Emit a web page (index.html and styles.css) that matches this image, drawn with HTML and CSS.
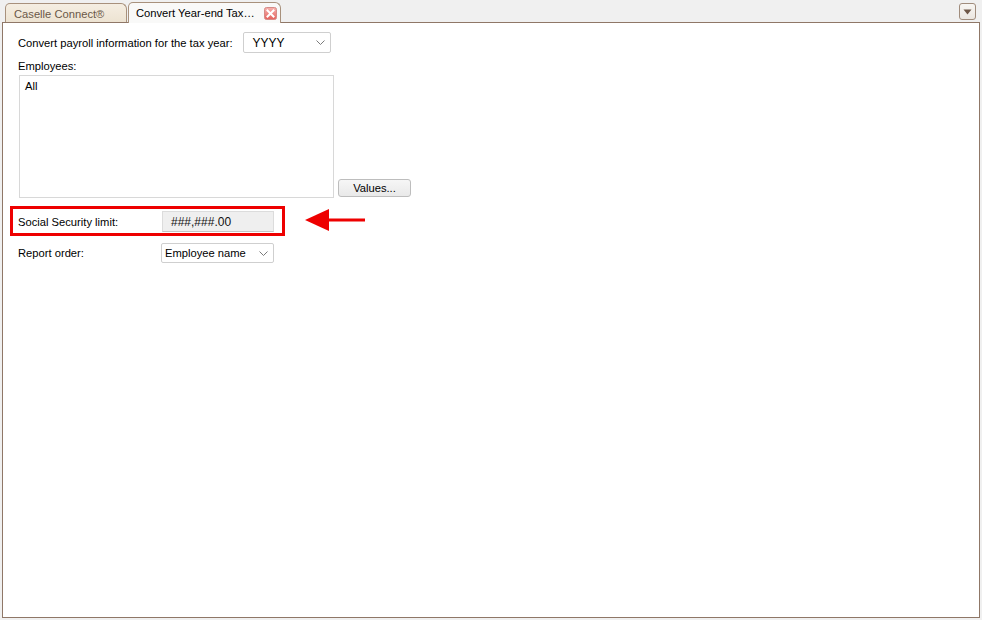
FILE: index.html
```html
<!DOCTYPE html>
<html>
<head>
<meta charset="utf-8">
<link rel="stylesheet" href="styles.css">
</head>
<body>
<div class="page">
  <div class="tabbar">
    <div class="tab tab-inactive">Caselle Connect®</div>
    <div class="tab tab-active">
      <span class="tab-title">Convert Year-end Tax…</span>
      <svg class="tab-close" width="13" height="13" viewBox="0 0 13 13">
        <defs>
          <linearGradient id="cg" x1="0" y1="0" x2="0" y2="1">
            <stop offset="0" stop-color="#f7b4b0"/>
            <stop offset="1" stop-color="#e4605a"/>
          </linearGradient>
        </defs>
        <rect x="0.5" y="0.5" width="12" height="12" rx="2" fill="url(#cg)" stroke="#d58a86"/>
        <path d="M3.5 3.5 L9.5 9.5 M9.5 3.5 L3.5 9.5" stroke="#ffffff" stroke-width="2" stroke-linecap="square"/>
      </svg>
    </div>
    <div class="tab-menu">
      <svg width="9" height="6" viewBox="0 0 9 6"><path d="M0.5 0.5 H8.5 L4.5 5.5 Z" fill="#6e5646"/></svg>
    </div>
  </div>
  <div class="panel">
    <div class="content">
      <div class="row">
        <span class="label">Convert payroll information for the tax year:</span>
        <div class="select select-year">
          <span>YYYY</span>
          <svg class="chev" width="9" height="5" viewBox="0 0 9 5"><path d="M0.5 0.5 L4.5 4.5 L8.5 0.5" fill="none" stroke="#7a7a7a" stroke-width="1"/></svg>
        </div>
      </div>
      <div class="label emp-label">Employees:</div>
      <div class="list-row">
        <div class="listbox"><div class="list-item">All</div></div>
        <div class="button">Values...</div>
      </div>
      <div class="highlight-row">
        <div class="highlight">
          <span class="label ss-label">Social Security limit:</span>
          <div class="field">###,###.00</div>
        </div>
        <svg class="arrow" width="60" height="22" viewBox="0 0 60 22">
          <path d="M0 11 L24 0 L24 22 Z" fill="#ee0000"/>
          <rect x="22" y="9.5" width="38" height="3" fill="#ee0000"/>
        </svg>
      </div>
      <div class="row report-row">
        <span class="label report-label">Report order:</span>
        <div class="select select-order">
          <span>Employee name</span>
          <svg class="chev" width="9" height="5" viewBox="0 0 9 5"><path d="M0.5 0.5 L4.5 4.5 L8.5 0.5" fill="none" stroke="#7a7a7a" stroke-width="1"/></svg>
        </div>
      </div>
    </div>
  </div>
</div>
</body>
</html>
```

FILE: styles.css
```css
html, body {
  margin: 0;
  padding: 0;
}
body {
  font-family: "Liberation Sans", Arial, sans-serif;
  font-size: 11.2px;
  color: #000;
  background: #f0f0f0;
}
.page {
  width: 982px;
  height: 620px;
  display: flex;
  flex-direction: column;
  background: #f0f0f0;
  box-sizing: border-box;
}
.tabbar {
  height: 22px;
  display: flex;
  align-items: flex-end;
  padding-left: 5px;
  padding-right: 6px;
  flex: none;
}
.tab {
  box-sizing: border-box;
  display: flex;
  align-items: center;
  border: 1px solid #a8917c;
  border-bottom: none;
  border-radius: 5px 6px 0 0;
  white-space: nowrap;
}
.tab-inactive {
  width: 122px;
  height: 19px;
  padding-left: 8px;
  padding-top: 1px;
  background: linear-gradient(#f5eee2, #ede3d2);
  color: #6a5847;
}
.tab-active {
  position: relative;
  z-index: 1;
  width: 153px;
  height: 21px;
  margin-left: 1px;
  margin-bottom: -1px;
  padding-left: 7px;
  padding-right: 3px;
  padding-bottom: 1px;
  background: #f9f9f8;
  color: #000;
}
.tab-title {
  flex: 1;
}
.tab-close {
  display: block;
  margin-top: 1px;
}
.tab-menu {
  margin-left: auto;
  align-self: flex-start;
  margin-top: 3px;
  box-sizing: border-box;
  width: 17px;
  height: 17px;
  border: 1px solid #a08c7c;
  border-radius: 3px;
  background: linear-gradient(#f8f6f3, #ebe6e0);
  display: flex;
  align-items: center;
  justify-content: center;
}
.tab-menu svg {
  display: block;
}
.panel {
  flex: 1;
  margin: 0 2px 2px 2px;
  border: 1px solid #8f7767;
  background: #ffffff;
}
.content {
  display: flex;
  flex-direction: column;
  align-items: flex-start;
  padding: 9px 0 0 15px;
}
.row {
  display: flex;
  align-items: center;
}
.label {
  line-height: 14px;
}
.select {
  box-sizing: border-box;
  display: flex;
  align-items: center;
  background: #fff;
  border: 1px solid #cfcfcf;
  border-radius: 2px;
}
.select span {
  flex: 1;
}
.chev {
  display: block;
}
.select-year {
  width: 88px;
  height: 21px;
  margin-left: 10px;
  padding-left: 9px;
  padding-right: 5px;
  font-size: 12px;
}
.emp-label {
  margin-top: 6px;
}
.list-row {
  display: flex;
  align-items: flex-end;
  margin-top: 2px;
}
.listbox {
  box-sizing: border-box;
  width: 315px;
  height: 123px;
  margin-left: 1px;
  border: 1px solid #d8d8d8;
  padding: 3px 5px;
}
.list-item {
  line-height: 14px;
}
.button {
  box-sizing: border-box;
  width: 73px;
  height: 18px;
  margin-left: 4px;
  margin-bottom: 1px;
  border: 1px solid #bdbdbd;
  border-radius: 3px;
  background: linear-gradient(#f6f6f6, #e9e9e9);
  display: flex;
  align-items: center;
  justify-content: center;
}
.highlight-row {
  display: flex;
  align-items: center;
  margin-top: 8px;
  margin-left: -8px;
}
.highlight {
  box-sizing: border-box;
  width: 275px;
  height: 30px;
  border: 3px solid #ee0000;
  padding: 2px 8px 1px 5px;
  display: flex;
  align-items: center;
}
.ss-label {
  width: 144px;
  flex: none;
}
.field {
  box-sizing: border-box;
  width: 112px;
  height: 21px;
  background: #efefef;
  border: 1px solid #dcdcdc;
  border-bottom-color: #c4c4c4;
  padding-left: 8px;
  display: flex;
  align-items: center;
  font-size: 12px;
  color: #111;
}
.arrow {
  display: block;
  margin-left: 20px;
  margin-top: -2px;
}
.report-row {
  margin-top: 7px;
}
.report-label {
  width: 143px;
  flex: none;
}
.select-order {
  width: 113px;
  height: 20px;
  padding-left: 3px;
  padding-right: 5px;
}
```
